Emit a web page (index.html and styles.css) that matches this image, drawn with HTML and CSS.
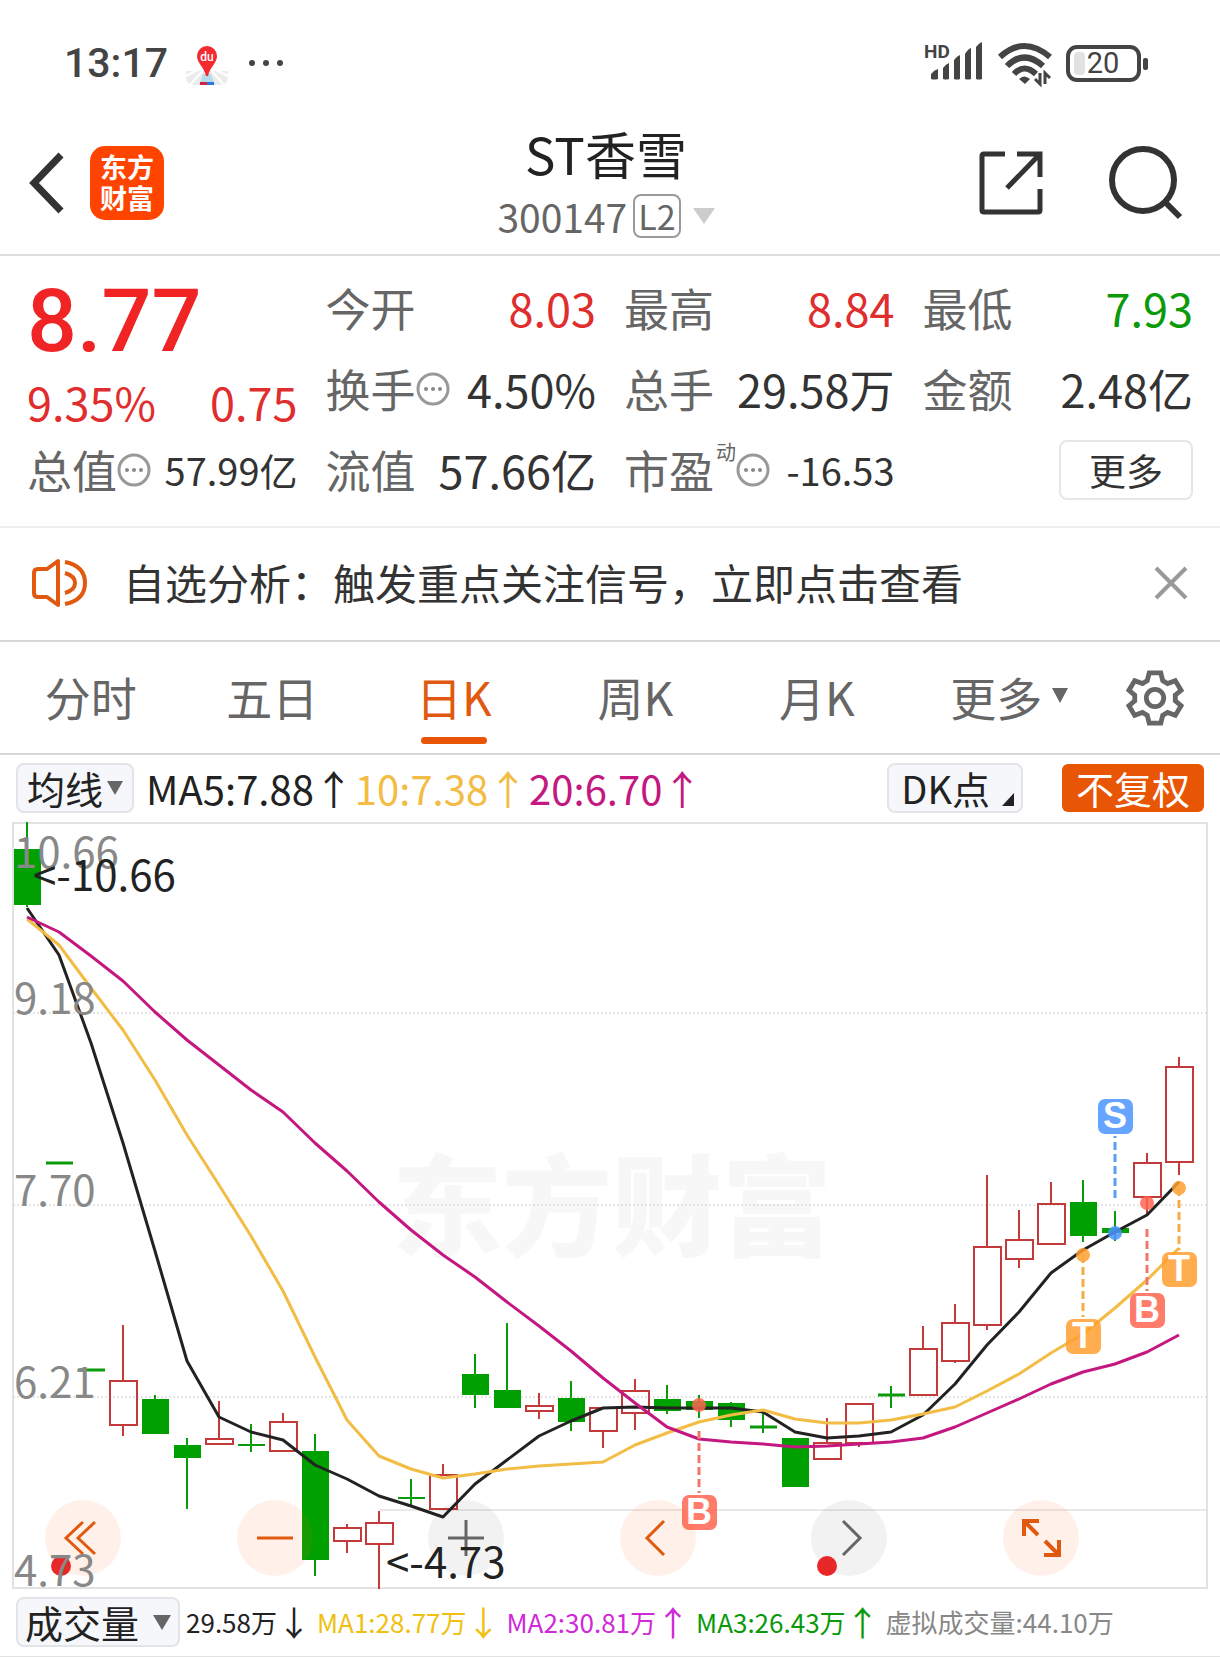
FILE: index.html
```html
<!DOCTYPE html>
<html lang="zh-CN">
<head>
  <meta charset="UTF-8" />
  <meta name="viewport" content="width=device-width, initial-scale=1.0"/>
  <title>ST香雪 300147</title>
  <link rel="stylesheet" href="styles.css">
</head>
<body>

  <!-- Status bar -->
  <div class="status-bar">
    <span class="clock">13:17</span>
    <svg class="map-icon" width="42" height="44" viewBox="0 0 42 44">
      <path d="M0 30h42v6q0 8-8 8H8q-8 0-8-8z" fill="#ececec"/>
      <path d="M18 28L4 44M24 28l14 16M12 29L0 35M30 29l12 6" stroke="#fff" stroke-width="2"/>
      <path d="M17 33h8l4 11H13z" fill="#b5dcea"/>
      <path d="M14 41h7v3h-7z" fill="#d8213b"/>
      <path d="M21 41h7v3h-7z" fill="#2a78e4"/>
      <path d="M21 5a10 10 0 0 1 10 10c0 7-7 11-9 20h-2c-2-9-9-13-9-20A10 10 0 0 1 21 5z" fill="#f32a2f"/>
      <text x="21" y="20" class="map-text">du</text>
    </svg>
    <svg width="34" height="8" viewBox="0 0 34 8" fill="#444">
      <circle cx="3" cy="4" r="3"/><circle cx="17" cy="4" r="3"/><circle cx="31" cy="4" r="3"/>
    </svg>
    <div class="status-right">
      <svg width="60" height="40" viewBox="0 0 60 40" fill="#444">
        <text x="0" y="15" class="hd-text">HD</text>
        <path d="M7 36v-5q3-4 7-5v10q-4 1-7 0zM19 36V25q3-4 6-5v16q-3 1-6 0zM30 36V17q3-4 6-5v24q-3 1-6 0zM41 36V11q3-5 6-6v31q-3 1-6 0zM52 36V4q3-4 6-5v37q-3 1-6 0z"/>
      </svg>
      <svg width="54" height="42" viewBox="0 0 54 42">
        <g fill="none" stroke="#444" stroke-width="6">
          <path d="M2 15Q26-7 52 15"/>
          <path d="M9 24Q26 7 45 24"/>
          <path d="M16 32Q26 21 38 32"/>
        </g>
        <path d="M21 37q5-5 11 0l-5 5z" fill="#444"/>
        <path d="M42 31v11l-5-5M47 42V31l5 5" fill="none" stroke="#444" stroke-width="3"/>
      </svg>
      <svg width="82" height="38" viewBox="0 0 82 38">
        <rect x="2" y="3" width="71" height="33" rx="9" fill="none" stroke="#444" stroke-width="4"/>
        <rect x="8" y="8" width="11" height="23" rx="4" fill="#e2e2e2"/>
        <rect x="77" y="14" width="5" height="12" rx="2" fill="#444"/>
        <text x="37" y="29" class="battery-text">20</text>
      </svg>
    </div>
  </div>

  <!-- Header -->
  <header class="header">
    <div class="header-side">
      <button class="icon-button" aria-label="返回">
        <svg width="36" height="64" viewBox="0 0 36 64" fill="none" stroke="#333" stroke-width="7">
          <path d="M33 4L6 32l27 28"/>
        </svg>
      </button>
      <a class="logo" href="#"><span>东方</span><span>财富</span></a>
    </div>
    <div class="title-box">
      <h1>ST香雪</h1>
      <button class="code">300147<span class="level">L2</span>
        <svg width="22" height="16" viewBox="0 0 22 16"><path d="M0 0h22L11 16z" fill="#ccc"/></svg>
      </button>
    </div>
    <div class="header-side header-right">
      <button class="icon-button" aria-label="分享">
        <svg width="64" height="64" viewBox="0 0 64 64" fill="none" stroke="#333" stroke-width="5">
          <path d="M26 3H5Q3 3 3 5v54q0 2 2 2h54q2 0 2-2V38M38 3h23v23M61 3L28 37"/>
        </svg>
      </button>
      <button class="icon-button" aria-label="搜索">
        <svg width="76" height="76" viewBox="0 0 76 76" fill="none" stroke="#333" stroke-width="6">
          <circle cx="35" cy="35" r="31"/>
          <path d="M57 57l15 15"/>
        </svg>
      </button>
    </div>
  </header>

  <!-- Quote -->
  <section class="quote">
    <div class="price-box">
      <div class="price">8.77</div>
      <div class="change"><span>9.35%</span><span>0.75</span></div>
    </div>
    <div class="cell"><span class="label">今开</span><span class="value up">8.03</span></div>
    <div class="cell"><span class="label">最高</span><span class="value up">8.84</span></div>
    <div class="cell"><span class="label">最低</span><span class="value down">7.93</span></div>
    <div class="cell">
      <span class="label">换手<svg class="tip" viewBox="0 0 34 34"><use href="#tip"/></svg></span>
      <span class="value">4.50%</span>
    </div>
    <div class="cell"><span class="label">总手</span><span class="value">29.58万</span></div>
    <div class="cell"><span class="label">金额</span><span class="value">2.48亿</span></div>
    <div class="cell">
      <span class="label">总值<svg class="tip" viewBox="0 0 34 34"><use href="#tip"/></svg></span>
      <span class="value small">57.99亿</span>
    </div>
    <div class="cell"><span class="label">流值</span><span class="value">57.66亿</span></div>
    <div class="cell">
      <span class="label">市盈<sup>动</sup><svg class="tip" viewBox="0 0 34 34"><use href="#tip"/></svg></span>
      <span class="value small">-16.53</span>
    </div>
    <div class="cell cell-end"><button class="more-button">更多</button></div>
  </section>

  <svg class="defs" width="0" height="0">
    <symbol id="tip" viewBox="0 0 34 34">
      <circle cx="17" cy="17" r="15" fill="none" stroke="#999" stroke-width="3"/>
      <circle cx="10" cy="17" r="2" fill="#888"/><circle cx="17" cy="17" r="2" fill="#888"/><circle cx="24" cy="17" r="2" fill="#888"/>
    </symbol>
  </svg>

  <!-- Notice -->
  <section class="notice">
    <svg width="56" height="50" viewBox="0 0 56 50" fill="none" stroke="#e0590f" stroke-width="4" stroke-linejoin="round">
      <path d="M26 3L15 11H6q-4 0-4 4v20q0 4 4 4h9l11 8z"/>
      <path d="M33 4q20 4 20 21T33 46M33 15q10 3 10 10T33 35"/>
    </svg>
    <a href="#">自选分析：触发重点关注信号，立即点击查看</a>
    <button class="icon-button" aria-label="关闭">
      <svg width="34" height="34" viewBox="0 0 34 34" stroke="#999" stroke-width="4"><path d="M2 2l30 30M32 2L2 32"/></svg>
    </button>
  </section>

  <!-- Period tabs -->
  <nav class="tabs">
    <button class="tab">分时</button>
    <button class="tab">五日</button>
    <button class="tab active">日K</button>
    <button class="tab">周K</button>
    <button class="tab">月K</button>
    <button class="tab tab-more">更多<svg width="16" height="15" viewBox="0 0 16 15"><path d="M0 0h16L8 15z" fill="#666"/></svg></button>
    <button class="settings" aria-label="设置">
      <svg width="56" height="58" viewBox="0 0 58 58" fill="none" stroke="#666" stroke-width="5">
        <path d="M23 3h12l2 8 5 3 8-3 6 10-6 5v6l6 5-6 10-8-3-5 3-2 8H23l-2-8-5-3-8 3-6-10 6-5v-6l-6-5 6-10 8 3 5-3z"/>
        <circle cx="29" cy="29" r="9"/>
      </svg>
    </button>
  </nav>

  <!-- Moving averages -->
  <div class="ma-bar">
    <button class="chip">均线<svg width="16" height="14" viewBox="0 0 16 14"><path d="M0 0h16L8 14z" fill="#666"/></svg></button>
    <div class="ma-values">
      <span>MA5:7.88↑</span>
      <span class="ma10">10:7.38↑</span>
      <span class="ma20">20:6.70↑</span>
    </div>
    <button class="chip chip-dk">DK点<svg width="12" height="13" viewBox="0 0 12 13"><path d="M12 0v13H0z" fill="#222"/></svg></button>
    <button class="chip-solid">不复权</button>
  </div>

  <!-- K line chart -->
  <div class="chart">
    <svg class="chart-svg" viewBox="0 822 1220 768">
      <text x="612" y="1248" class="watermark">东方财富</text>
      <path d="M13 823H1207V1588H13z" fill="none" stroke="#e2e2e2" stroke-width="2"/>
      <path d="M13 1013H1207M13 1205H1207M13 1397H1207" stroke="#ccc" stroke-dasharray="2 2"/>
      <path d="M379 1510H1207" stroke="#d2d2d2"/>

      <!-- falling candles -->
      <g fill="#00a000">
        <path class="wick-down" d="M27 822V907M155 1395V1434M187 1438V1509M251 1424V1452M315 1434V1576M411 1479V1507M475 1354V1408M507 1323V1408M571 1381V1431M667 1385V1414M699 1395V1418M731 1402V1427M763 1412V1433M891 1386V1408M1083 1180V1242M1115 1211V1241"/>
        <path class="wick-down" d="M238 1445h27M398 1498h27"/>
        <path class="flat-down" d="M46 1163h27M78 1370h27M750 1427h27M878 1395h27"/>
        <path d="M14 849h27v56h-27zM142 1399h27v35h-27zM174 1445h27v13h-27zM302 1451h27v109h-27zM462 1374h27v21h-27zM494 1390h27v18h-27zM558 1398h27v24h-27zM654 1399h27v12h-27zM686 1401h27v9h-27zM718 1403h27v17h-27zM782 1438h27v49h-27zM1070 1202h27v34h-27zM1102 1228h27v5h-27z"/>
      </g>

      <!-- rising candles -->
      <path class="candle-up" d="M123 1325V1381M123 1425V1436M219 1401V1439M283 1413V1422M347 1524V1528M347 1541V1553M379 1511V1523M379 1544V1589M443 1464V1475M539 1393V1406M539 1411V1419M603 1431V1448M635 1379V1391M635 1413V1430M827 1418V1443M859 1443V1447M923 1326V1349M955 1304V1323M955 1361V1363M987 1175V1247M987 1325V1330M1019 1210V1240M1019 1259V1268M1051 1182V1204M1147 1153V1163M1147 1197V1216M1179 1057V1067M1179 1162V1175"/>
      <path class="candle-up" d="M110 1381h27v44h-27zM206 1439h27v5h-27zM270 1422h27v29h-27zM334 1528h27v13h-27zM366 1523h27v21h-27zM430 1475h27v34h-27zM526 1406h27v5h-27zM590 1408h27v23h-27zM622 1391h27v22h-27zM814 1443h27v16h-27zM846 1404h27v39h-27zM910 1349h27v46h-27zM942 1323h27v38h-27zM974 1247h27v78h-27zM1006 1240h27v19h-27zM1038 1204h27v40h-27zM1134 1163h27v34h-27zM1166 1067h27v95h-27z"/>

      <!-- average lines -->
      <g fill="none" stroke-width="3" stroke-linejoin="round">
        <polyline stroke="#222" points="27,908 59,955 91,1043 123,1143 155,1251 187,1361 219,1417 251,1432 283,1440 315,1465 347,1479 379,1496 411,1506 443,1517 475,1484 507,1460 539,1436 571,1421 603,1408 635,1407 667,1408 699,1408 731,1408 763,1412 795,1432 827,1438 859,1436 891,1432 923,1415 955,1384 987,1345 1019,1312 1051,1273 1083,1250 1115,1232 1147,1215 1179,1182"/>
        <polyline stroke="#f2bc45" points="27,919 59,945 91,988 123,1030 155,1080 187,1135 219,1185 251,1236 283,1291 315,1357 347,1420 379,1456 411,1469 443,1478 475,1474 507,1469 539,1466 571,1464 603,1462 635,1445 667,1433 699,1422 731,1415 763,1410 795,1419 827,1423 859,1423 891,1420 923,1414 955,1407 987,1391 1019,1374 1051,1353 1083,1334 1115,1308 1147,1280 1179,1248"/>
        <polyline stroke="#c4177f" points="27,917 59,932 91,956 123,981 155,1012 187,1040 219,1065 251,1090 283,1112 315,1143 347,1171 379,1202 411,1230 443,1255 475,1277 507,1302 539,1326 571,1351 603,1378 635,1403 667,1427 699,1439 731,1442 763,1444 795,1447 827,1446 859,1444 891,1442 923,1438 955,1427 987,1413 1019,1399 1051,1384 1083,1372 1115,1364 1147,1352 1179,1335"/>
      </g>

      <!-- trade points -->
      <g class="mark mark-b">
        <circle cx="699" cy="1405" r="7"/><path d="M699 1431V1493"/>
        <rect x="682" y="1495" width="35" height="35" rx="7"/><text x="699" y="1524">B</text>
        <circle cx="1147" cy="1203" r="7"/><path d="M1147 1229V1291"/>
        <rect x="1130" y="1293" width="35" height="35" rx="7"/><text x="1147" y="1322">B</text>
      </g>
      <g class="mark mark-t">
        <circle cx="1083" cy="1255" r="7"/><path d="M1083 1255V1317"/>
        <rect x="1066" y="1319" width="35" height="35" rx="7"/><text x="1083" y="1348">T</text>
        <circle cx="1179" cy="1188" r="7"/><path d="M1179 1188V1250"/>
        <rect x="1162" y="1252" width="35" height="35" rx="7"/><text x="1179" y="1281">T</text>
      </g>
      <g class="mark mark-s">
        <circle cx="1115" cy="1233" r="7"/><path d="M1115 1198V1136"/>
        <rect x="1098" y="1099" width="35" height="35" rx="7"/><text x="1115" y="1128">S</text>
      </g>

      <g class="axis">
        <text x="14" y="868">10.66</text>
        <text x="14" y="1014">9.18</text>
        <text x="14" y="1206">7.70</text>
        <text x="14" y="1398">6.21</text>
      </g>
      <text x="33" y="891" class="peak">&lt;-10.66</text>
    </svg>

    <div class="chart-nav">
      <button class="round dot" aria-label="最早">
        <svg viewBox="0 0 76 76"><path d="M38 22L21 38l17 16M50 22L33 38l17 16"/></svg>
      </button>
      <button class="round" aria-label="缩小">
        <svg viewBox="0 0 76 76"><path d="M20 38h36"/></svg>
      </button>
      <button class="round gray" aria-label="放大">
        <svg viewBox="0 0 76 76"><path d="M20 38h36M38 20v36"/></svg>
      </button>
      <button class="round" aria-label="左移">
        <svg viewBox="0 0 76 76"><path d="M44 21L27 38l17 17"/></svg>
      </button>
      <button class="round gray dot" aria-label="右移">
        <svg viewBox="0 0 76 76"><path d="M32 21l17 17-17 17"/></svg>
      </button>
      <button class="round full" aria-label="全屏">
        <svg viewBox="0 0 76 76"><path d="M36 21H21v15M22 22l13 13M41 55h15V40M55 54L42 41"/></svg>
      </button>
    </div>

    <svg class="chart-svg chart-labels" viewBox="0 822 1220 768">
      <g class="axis"><text x="14" y="1586">4.73</text></g>
      <text x="386" y="1578" class="peak">&lt;-4.73</text>
    </svg>
  </div>

  <!-- Volume -->
  <div class="volume-bar">
    <button class="chip chip-volume">成交量<svg width="18" height="15" viewBox="0 0 18 15"><path d="M0 0h18L9 15z" fill="#666"/></svg></button>
    <span>29.58万<i>↓</i></span>
    <span class="vol1">MA1:28.77万<i>↓</i></span>
    <span class="vol2">MA2:30.81万<i>↑</i></span>
    <span class="vol3">MA3:26.43万<i>↑</i></span>
    <span class="virtual">虚拟成交量:44.10万</span>
  </div>

</body>
</html>
```
FILE: styles.css
```css
* { box-sizing: border-box; }

body {
  font-family: "Noto Sans CJK SC", Roboto, sans-serif;
  margin: 0;
  background: #fff;
  color: #333;
}

button {
  font-family: inherit;
  color: inherit;
  border: none;
  background: none;
  padding: 0;
  cursor: pointer;
}

a {
  color: inherit;
  text-decoration: none;
}

svg {
  display: block;
  flex-shrink: 0;
  overflow: visible;
}

/* Status bar */
.status-bar {
  display: flex;
  align-items: center;
  height: 126px;
  padding: 0 72px 0 64px;
}

.clock {
  font-family: Roboto, sans-serif;
  font-size: 41px;
  font-weight: 500;
  color: #444;
}

.map-icon {
  margin: 0 21px 0 18px;
}

.map-text {
  font-family: Roboto, sans-serif;
  font-size: 12px;
  font-weight: 500;
  fill: #fff;
  text-anchor: middle;
}

.status-right {
  display: flex;
  align-items: center;
  gap: 14px;
  margin-left: auto;
}

.hd-text {
  font-family: Roboto, sans-serif;
  font-size: 19px;
  font-weight: 700;
}

.battery-text {
  font-family: Roboto, sans-serif;
  font-size: 29px;
  fill: #444;
  text-anchor: middle;
}

/* Header */
.header {
  display: flex;
  align-items: center;
  height: 130px;
  padding: 0 36px 14px 28px;
  border-bottom: 2px solid #ddd;
}

.header-side {
  display: flex;
  align-items: center;
  flex: 1;
  gap: 26px;
}

.header-right {
  justify-content: flex-end;
  gap: 65px;
}

.logo {
  display: flex;
  flex-direction: column;
  justify-content: center;
  width: 74px;
  height: 74px;
  padding-bottom: 2px;
  border-radius: 15px;
  background: #ff4400;
  color: #fff;
  font-size: 27px;
  font-weight: 700;
  line-height: 31px;
  text-align: center;
}

.title-box {
  display: flex;
  flex-direction: column;
  align-items: center;
}

.title-box h1 {
  margin: 0;
  font-size: 51px;
  font-weight: 400;
  line-height: 66px;
  color: #222;
}

.code {
  display: flex;
  align-items: center;
  font-size: 39px;
  line-height: 60px;
  color: #666;
}

.level {
  height: 44px;
  padding: 0 3px;
  margin: 0 12px 0 6px;
  border: 2px solid #999;
  border-radius: 8px;
  font-size: 34px;
  line-height: 40px;
}

/* Quote */
.quote {
  display: grid;
  grid-template-columns: repeat(4, 1fr);
  grid-auto-rows: 81px;
  column-gap: 28px;
  padding: 11px 27px 16px;
  border-bottom: 2px solid #eee;
}

.price-box {
  grid-row: span 2;
  color: #e02d2d;
}

.price {
  font-family: Roboto, sans-serif;
  font-size: 88px;
  font-weight: 500;
  line-height: 108px;
  color: #f02424;
}

.change {
  display: flex;
  justify-content: space-between;
  font-size: 45px;
  line-height: 54px;
}

.cell {
  display: flex;
  align-items: center;
  justify-content: space-between;
  font-size: 45px;
  line-height: 60px;
  white-space: nowrap;
}

.cell-end {
  justify-content: flex-end;
}

.label {
  display: flex;
  align-items: center;
  color: #666;
}

.label sup {
  align-self: flex-start;
  margin-left: 2px;
  font-size: 20px;
  line-height: 24px;
}

.tip {
  width: 34px;
  height: 34px;
}

.up { color: #e02d2d; }
.down { color: #0a9a0a; }
.small { font-size: 38px; }

.more-button {
  width: 134px;
  height: 60px;
  border: 2px solid #e6e6e6;
  border-radius: 8px;
  font-size: 37px;
  line-height: 54px;
}

/* Notice */
.notice {
  display: flex;
  align-items: center;
  height: 114px;
  padding: 0 32px 2px;
  border-bottom: 2px solid #d8d8d8;
  font-size: 42px;
}

.notice a {
  flex: 1;
  margin-left: 35px;
  padding-bottom: 4px;
  white-space: nowrap;
}

/* Tabs */
.tabs {
  display: grid;
  grid-template-columns: repeat(6, 1fr) 131px;
  height: 113px;
  border-bottom: 2px solid #d8d8d8;
}

.tab {
  position: relative;
  display: flex;
  align-items: center;
  justify-content: center;
  padding-bottom: 4px;
  font-size: 46px;
  color: #666;
}

.tab.active {
  color: #e0590f;
}

.tab.active::after {
  content: "";
  position: absolute;
  bottom: 9px;
  left: calc(50% - 33px);
  width: 66px;
  height: 7px;
  border-radius: 4px;
  background: #e85505;
}

.tab-more {
  gap: 10px;
  padding-left: 22px;
}

.settings {
  display: flex;
  align-items: center;
  justify-content: center;
}

/* Moving averages */
.ma-bar {
  display: flex;
  align-items: center;
  height: 67px;
  padding: 0 16px 2px;
  color: #222;
}

.chip {
  display: flex;
  align-items: center;
  gap: 4px;
  height: 50px;
  padding: 0 9px;
  border: 2px solid #e2e4e8;
  border-radius: 8px;
  background: #f5f7fa;
  color: #222;
  font-size: 38px;
  line-height: 46px;
}

.ma-values {
  display: flex;
  flex: 1;
  gap: 1px;
  margin-left: 12px;
  font-size: 40px;
  line-height: 48px;
  white-space: nowrap;
}

.ma10 { color: #f2bc45; }
.ma20 { color: #c4177f; }

.chip-dk {
  gap: 12px;
  padding: 0 7px 0 12px;
  font-size: 38px;
}

.chip-dk svg {
  align-self: flex-end;
  margin-bottom: 5px;
}

.chip-solid {
  height: 48px;
  margin-left: 39px;
  padding: 0 14px;
  border-radius: 6px;
  background: #e85505;
  color: #fff;
  font-size: 38px;
  line-height: 46px;
}

/* Chart */
.chart {
  position: relative;
}

.chart-svg {
  width: 100%;
  height: auto;
}

.chart-labels {
  position: absolute;
  top: 0;
  left: 0;
  pointer-events: none;
}

.watermark {
  font-size: 110px;
  font-weight: 900;
  fill: #f7f7f7;
  text-anchor: middle;
}

.wick-down {
  stroke: #0a9a0a;
  stroke-width: 2;
}

.flat-down {
  stroke: #0a9a0a;
  stroke-width: 3;
}

.candle-up {
  fill: none;
  stroke: #c23a3a;
  stroke-width: 2;
}

.axis text {
  font-size: 42px;
  fill: #888;
}

.peak {
  font-size: 42px;
  fill: #222;
}

.mark path {
  fill: none;
  stroke-width: 3;
  stroke-dasharray: 8 4;
}

.mark circle,
.mark rect {
  opacity: 0.85;
}

.mark text {
  font-family: "Liberation Sans", sans-serif;
  font-size: 36px;
  font-weight: 700;
  fill: #fff;
  text-anchor: middle;
}

.mark-b { fill: #ff6450; }
.mark-b path { stroke: #f07868; }
.mark-t { fill: #ff9f30; }
.mark-t path { stroke: #f5ab48; }
.mark-s { fill: #4a94ff; }
.mark-s path { stroke: #5c9ff0; }

.chart-nav {
  position: absolute;
  left: 45px;
  right: 141px;
  bottom: 14px;
  display: flex;
  justify-content: space-between;
}

.round {
  position: relative;
  width: 76px;
  height: 76px;
  border-radius: 50%;
  background: rgba(255, 100, 20, 0.09);
}

.round svg {
  width: 76px;
  height: 76px;
  fill: none;
  stroke: #e0590f;
  stroke-width: 3;
}

.round.full svg {
  stroke-width: 4;
}

.round.gray {
  background: rgba(0, 0, 0, 0.05);
}

.round.gray svg {
  stroke: #666;
}

.dot::after {
  content: "";
  position: absolute;
  left: 6px;
  bottom: 0;
  width: 20px;
  height: 20px;
  border-radius: 50%;
  background: #e82828;
}

/* Volume */
.volume-bar {
  display: flex;
  align-items: center;
  gap: 6px;
  height: 68px;
  padding: 0 16px 2px;
  border-bottom: 2px solid #e2e2e2;
  color: #222;
  font-size: 26px;
  line-height: 48px;
  white-space: nowrap;
}

.volume-bar span {
  display: flex;
  align-items: center;
}

.volume-bar i {
  font-size: 34px;
  font-style: normal;
}

.chip-volume {
  gap: 14px;
  padding: 0 7px;
}

.vol1 { color: #f0c010; }
.vol2 { color: #d02ad8; }
.vol3 { color: #0a9a0a; }
.virtual { color: #888; }
```
